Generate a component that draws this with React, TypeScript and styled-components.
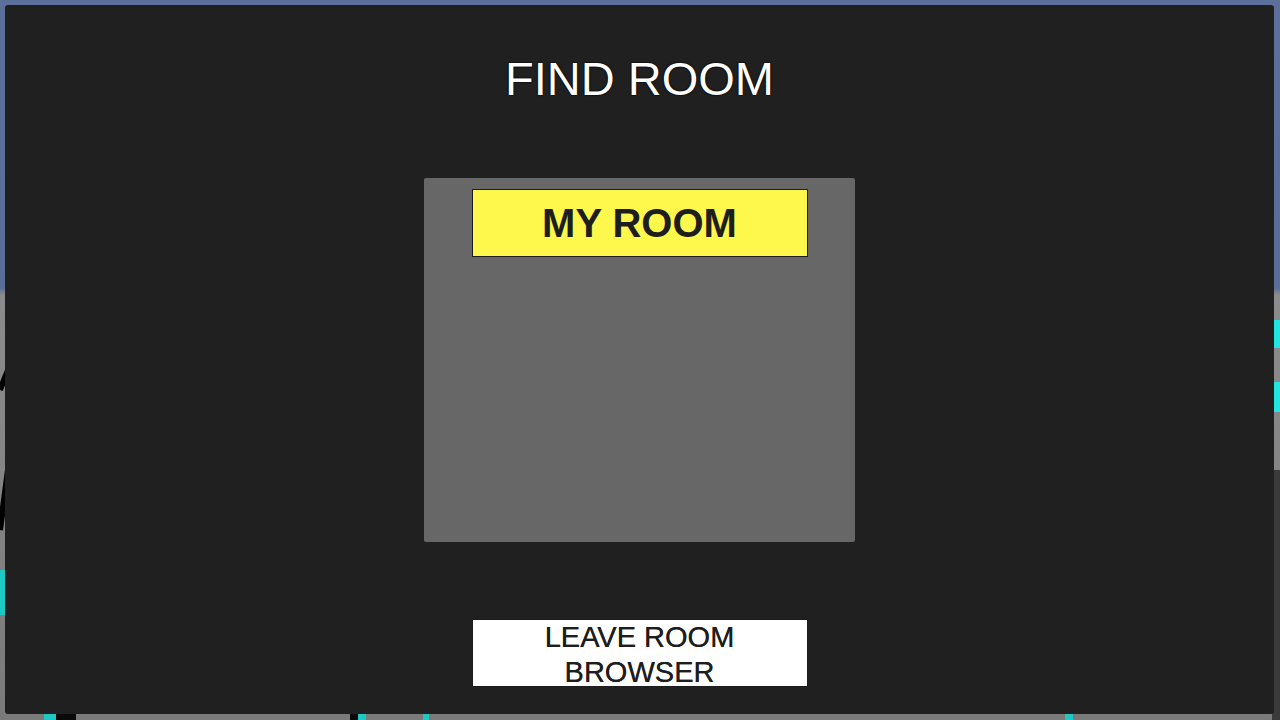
import styled, { createGlobalStyle } from 'styled-components';

const GlobalStyle = createGlobalStyle`
  html, body {
    margin: 0;
    padding: 0;
    width: 1280px;
    height: 720px;
    overflow: hidden;
  }
  body {
    font-family: "Liberation Sans", Arial, sans-serif;
    background: #202020;
  }
`;

const Stage = styled.div`
  position: relative;
  width: 1280px;
  height: 720px;
  padding: 5px 6px 6px 5px;
  box-sizing: border-box;
  background: linear-gradient(180deg, #5d709c 0%, #5a6d98 40%, #8c8c8c 41%, #7a7a7a 100%);
`;

const Scene = styled.svg`
  position: absolute;
  inset: 0;
  width: 1280px;
  height: 720px;
`;

const Panel = styled.main`
  position: relative;
  height: 100%;
  background: #202020;
  border-radius: 3px;
  display: flex;
  flex-direction: column;
  align-items: center;
  padding-top: 50px;
  box-sizing: border-box;
`;

const Title = styled.h1`
  margin: 0;
  font-size: 47px;
  line-height: 47px;
  font-weight: 400;
  color: #ffffff;
  letter-spacing: 0;
  text-shadow: 0 0 1px #000, 0 0 1px #000, 0 0 2px #000;
`;

const RoomList = styled.section`
  margin-top: 76px;
  width: 431px;
  height: 364px;
  background: #676767;
  border-radius: 2px;
  display: flex;
  flex-direction: column;
  align-items: center;
  padding-top: 11px;
  box-sizing: border-box;
`;

const Button = styled.button<{ $tone: 'yellow' | 'white' }>`
  width: 336px;
  height: 68px;
  margin: 0;
  padding: 0;
  border: 1px solid #1c1c1c;
  background: ${(p) => (p.$tone === 'yellow' ? '#fff84c' : '#ffffff')};
  color: #1e1e1e;
  font-family: "Liberation Sans", Arial, sans-serif;
  cursor: pointer;
  display: flex;
  flex-direction: column;
  align-items: center;
  box-sizing: border-box;
`;

const RoomButton = styled(Button)`
  justify-content: center;
  font-size: 40px;
  line-height: 40px;
  font-weight: 700;
`;

const LeaveButton = styled(Button)`
  margin-top: 77px;
  justify-content: flex-start;
  font-size: 29px;
  line-height: 35px;
  font-weight: 400;
  text-shadow: 0 0 0.6px #1e1e1e;
  overflow: visible;
`;

export default function App() {
  return (
    <>
      <GlobalStyle />
      <Stage>
        <Scene viewBox="0 0 1280 720">
          <rect x="0" y="570" width="8" height="45" fill="#1ec9c3" />
          <rect x="1272" y="320" width="8" height="28" fill="#22e6e0" />
          <rect x="1272" y="382" width="8" height="30" fill="#22e6e0" />
          <rect x="1272" y="470" width="8" height="250" fill="#3a3a3a" />
          <path d="M0 390 L8 370 M0 530 L8 470" stroke="#000" strokeWidth="6" />
          <rect x="44" y="713" width="12" height="7" fill="#1ec9c3" />
          <rect x="56" y="713" width="20" height="7" fill="#0a0a0a" />
          <rect x="350" y="713" width="10" height="7" fill="#0a0a0a" />
          <rect x="358" y="713" width="8" height="7" fill="#1ec9c3" />
          <rect x="423" y="713" width="6" height="7" fill="#1ec9c3" />
          <rect x="1065" y="713" width="8" height="7" fill="#1ec9c3" />
        </Scene>
        <Panel>
          <Title>FIND ROOM</Title>
          <RoomList>
            <RoomButton $tone="yellow">MY ROOM</RoomButton>
          </RoomList>
          <LeaveButton $tone="white">
            <span>LEAVE ROOM</span>
            <span>BROWSER</span>
          </LeaveButton>
        </Panel>
      </Stage>
    </>
  );
}
